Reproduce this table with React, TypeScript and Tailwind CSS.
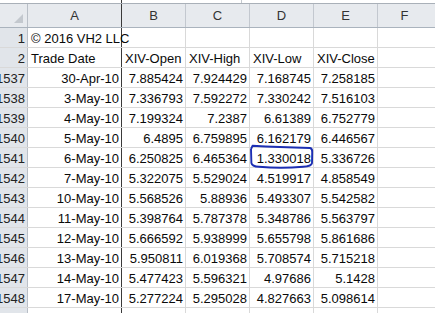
import React from "react"

type Row = [string, string, string, string, string, string]

const rows: Row[] = [
  ["1537", "30-Apr-10", "7.885424", "7.924429", "7.168745", "7.258185"],
  ["1538", "3-May-10", "7.336793", "7.592272", "7.330242", "7.516103"],
  ["1539", "4-May-10", "7.199324", "7.2387", "6.61389", "6.752779"],
  ["1540", "5-May-10", "6.4895", "6.759895", "6.162179", "6.446567"],
  ["1541", "6-May-10", "6.250825", "6.465364", "1.330018", "5.336726"],
  ["1542", "7-May-10", "5.322075", "5.529024", "4.519917", "4.858549"],
  ["1543", "10-May-10", "5.568526", "5.88936", "5.493307", "5.542582"],
  ["1544", "11-May-10", "5.398764", "5.787378", "5.348786", "5.563797"],
  ["1545", "12-May-10", "5.666592", "5.938999", "5.655798", "5.861686"],
  ["1546", "13-May-10", "5.950811", "6.019368", "5.708574", "5.715218"],
  ["1547", "14-May-10", "5.477423", "5.596321", "4.97686", "5.1428"],
  ["1548", "17-May-10", "5.277224", "5.295028", "4.827663", "5.098614"],
]

const rowHead =
  "w-[28px] shrink-0 h-full flex items-center justify-end pr-[2px] pt-[2px] bg-[#e1e5ea] border-r border-[#b9bfc7] text-[#222] overflow-hidden whitespace-nowrap"
const colA = "w-[94px] shrink-0 h-full border-r border-[#3a3a3a]"
const col = "w-[64px] shrink-0 h-full border-r border-[#d9d9d9]"

// hand drawn blue loop around the odd low value
function Circled() {
  return (
    <svg
      className="absolute left-[-2px] top-[-4px] pointer-events-none"
      width="68"
      height="27"
      viewBox="0 0 68 27"
    >
      <path
        d="M3 5 L4.5 1.8 Q30 3.2 62 4 Q64.5 4.6 64.2 8 L64 19 Q63.5 22.3 55 22.8 Q33 24.6 11 22.8 Q4 22.4 3.4 19 L3 5"
        fill="none"
        stroke="#1c2fb3"
        strokeWidth="1.9"
        strokeLinejoin="round"
      />
    </svg>
  )
}

function DataRow({ r }: { r: Row }) {
  return (
    <div className="flex h-[20px] border-b border-[#d9d9d9]">
      <div className={rowHead}>{r[0]}</div>
      <div className={colA + " flex items-center justify-end pr-[2px] pt-[2px]"}>{r[1]}</div>
      {r.slice(2).map((v, i) => (
        <div key={i} className={col + " relative flex items-center justify-end pr-[2px] pt-[2px]"}>
          {v}
          {r[0] === "1541" && i === 2 && <Circled />}
        </div>
      ))}
      <div className="flex-1 h-full" />
    </div>
  )
}

export default function App() {
  return (
    <div
      className="w-[435px] h-[313px] overflow-hidden bg-white text-[13px] text-[#0a0a0a]"
      style={{ fontFamily: '"Liberation Sans", Arial, sans-serif' }}
    >
      {/* formula bar edge */}
      <div className="flex h-[4px] border-b border-[#a9b0b8]">
        <div className="w-[122px] shrink-0 border-r border-[#3a3a3a]" />
        <div className="w-[120px] shrink-0 border-r border-[#c4c9cf]" />
        <div className="flex-1" />
      </div>

      {/* column letters */}
      <div className="flex h-[24px] border-b border-[#aab3bd] bg-[#e7eaee] text-[#333]">
        <div className="w-[28px] shrink-0 h-full border-r border-[#b9bfc7] relative">
          <svg className="absolute right-[4px] bottom-[4px]" width="9" height="9" viewBox="0 0 9 9">
            <path d="M9 0 L9 9 L0 9 Z" fill="#c3c8ce" />
          </svg>
        </div>
        <div className={colA + " flex items-center justify-center pt-[1px]"}>A</div>
        {["B", "C", "D", "E"].map((l) => (
          <div key={l} className="w-[64px] shrink-0 h-full border-r border-[#c3c8cf] flex items-center justify-center pt-[1px]">
            {l}
          </div>
        ))}
        <div className="flex-1 flex items-center justify-center pt-[1px] pr-[4px]">F</div>
      </div>

      {/* row 1 */}
      <div className="flex h-[20px] border-b border-[#d9d9d9]">
        <div className={rowHead}>1</div>
        <div className={colA + " flex items-center pl-[3px] pt-[2px] whitespace-nowrap overflow-visible"}>
          © 2016 VH2 LLC
        </div>
        <div className="w-[64px] shrink-0 h-full border-r border-[#d9d9d9]" />
        <div className={col} />
        <div className={col} />
        <div className={col} />
        <div className="flex-1 h-full" />
      </div>

      {/* row 2 */}
      <div className="flex h-[20px] border-b border-[#d9d9d9]">
        <div className={rowHead}>2</div>
        <div className={colA + " flex items-center pl-[3px] pt-[2px]"}>Trade Date</div>
        {["XIV-Open", "XIV-High", "XIV-Low", "XIV-Close"].map((h) => (
          <div key={h} className={col + " flex items-center pl-[3px] pt-[2px] whitespace-nowrap"}>
            {h}
          </div>
        ))}
        <div className="flex-1 h-full" />
      </div>

      {rows.map((r) => (
        <DataRow key={r[0]} r={r} />
      ))}

      <div className="flex h-[20px]">
        <div className={rowHead} />
        <div className={colA} />
        <div className={col} />
        <div className={col} />
        <div className={col} />
        <div className={col} />
      </div>
    </div>
  )
}
